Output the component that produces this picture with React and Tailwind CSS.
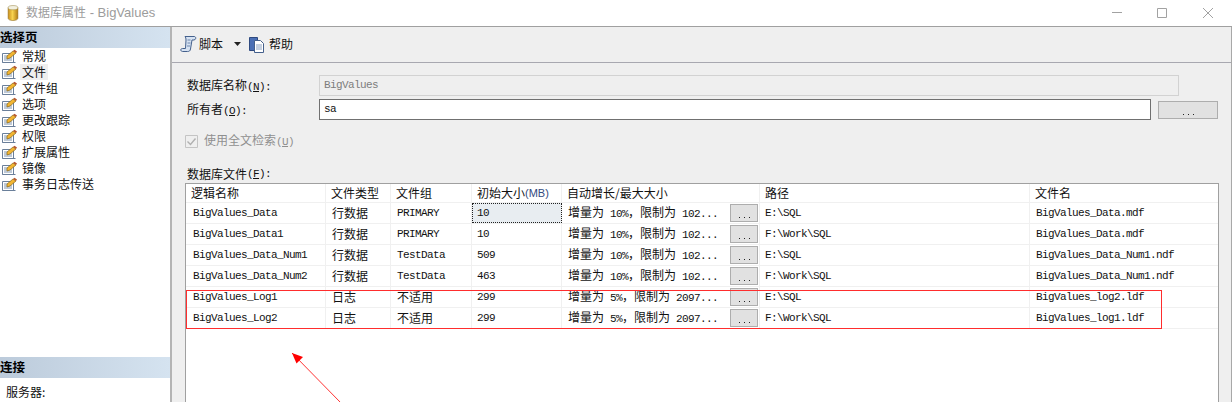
import React from "react";

const cjk = "font-['Noto_Sans_CJK_SC','Liberation_Sans',sans-serif]";
const mono = "font-['Liberation_Mono',monospace] text-[11px] tracking-[-0.6px] whitespace-pre";

function Mixed({ text }) {
  const parts = text.split(/([\x00-\xff]+)/).filter(Boolean);
  return (
    <>
      {parts.map((p, i) =>
        /^[\x00-\xff]+$/.test(p) ? (
          <span key={i} className={mono}>
            {p}
          </span>
        ) : (
          <span key={i}>{p}</span>
        )
      )}
    </>
  );
}

function Label({ before, mnemonic }) {
  return (
    <>
      {before}
      <span className={mono}>(</span>
      <span className={`${mono} underline`}>{mnemonic}</span>
      <span className={mono}>)</span>
    </>
  );
}

function PropIcon() {
  return (
    <svg width="17" height="15" viewBox="0 0 17 15" className="shrink-0">
      <path d="M1.5 4.5h11v9h-11z" fill="#fff" stroke="#6a7f9a" />
      <path d="M1.5 13.5h13" stroke="#6a7f9a" />
      <path d="M3 7h6M3 9h8M3 11h8" stroke="#7f93ad" />
      <path d="M6 7l6-5 3 2-6 5-3 1z" fill="#f3b531" stroke="#8a6a1c" strokeWidth="0.7" />
      <path d="M12 2l1.5-1.2L16 2.6 15 4z" fill="#b8572c" />
    </svg>
  );
}

function Ellipsis({ className }) {
  return (
    <div className={`flex items-end justify-center bg-[#e1e1e1] border border-[#adadad] pb-[1px] gap-[4px] ${className}`}>
      <i className="w-[1px] h-[1px] bg-[#222] mb-[2px]" />
      <i className="w-[1px] h-[1px] bg-[#222] mb-[2px]" />
      <i className="w-[1px] h-[1px] bg-[#222] mb-[2px]" />
    </div>
  );
}

const pages = ["常规", "文件", "文件组", "选项", "更改跟踪", "权限", "扩展属性", "镜像", "事务日志传送"];

const rows = [
  ["BigValues_Data", "行数据", "PRIMARY", "10", "增量为 10%，限制为 102...", "E:\\SQL", "BigValues_Data.mdf"],
  ["BigValues_Data1", "行数据", "PRIMARY", "10", "增量为 10%，限制为 102...", "F:\\Work\\SQL", "BigValues_Data.mdf"],
  ["BigValues_Data_Num1", "行数据", "TestData", "509", "增量为 10%，限制为 102...", "E:\\SQL", "BigValues_Data_Num1.ndf"],
  ["BigValues_Data_Num2", "行数据", "TestData", "463", "增量为 10%，限制为 102...", "F:\\Work\\SQL", "BigValues_Data_Num1.ndf"],
  ["BigValues_Log1", "日志", "不适用", "299", "增量为 5%，限制为 2097...", "E:\\SQL", "BigValues_log2.ldf"],
  ["BigValues_Log2", "日志", "不适用", "299", "增量为 5%，限制为 2097...", "F:\\Work\\SQL", "BigValues_log1.ldf"],
];

const cellBase = "h-full shrink-0 border-r border-[#f0f0f0] flex items-center overflow-hidden whitespace-nowrap";

function HeaderRow() {
  return (
    <div className="flex h-[19px] border-b border-[#f0f0f0] text-[#111] text-[12px]">
      <div className={`${cellBase} w-[140px] pl-[5px]`}>逻辑名称</div>
      <div className={`${cellBase} w-[65px] pl-[5px]`}>文件类型</div>
      <div className={`${cellBase} w-[81px] pl-[5px]`}>文件组</div>
      <div className={`${cellBase} w-[90px] pl-[5px]`}>
        初始大小<span className="font-['Liberation_Sans',sans-serif] text-[11px] text-[#334a80]">(MB)</span>
      </div>
      <div className={`${cellBase} w-[198px] pl-[5px]`}>自动增长/最大大小</div>
      <div className={`${cellBase} w-[270px] pl-[5px]`}>路径</div>
      <div className="h-full flex items-center pl-[5px]">文件名</div>
    </div>
  );
}

function DataRow({ r, selected }) {
  return (
    <div className="flex h-[21px] border-b border-[#f0f0f0] text-[#111] text-[12px]">
      <div className={`${cellBase} w-[140px] pl-[7px]`}><Mixed text={r[0]} /></div>
      <div className={`${cellBase} w-[65px] pl-[6px]`}><Mixed text={r[1]} /></div>
      <div className={`${cellBase} w-[81px] pl-[6px]`}><Mixed text={r[2]} /></div>
      <div
        className={`${cellBase} w-[90px] pl-[5px] ${
          selected ? "bg-[#e8edf1] outline-1 outline-dotted outline-[#222] -outline-offset-1" : ""
        }`}
      >
        <Mixed text={r[3]} />
      </div>
      <div className={`${cellBase} w-[198px] pl-[6px] justify-between pr-[1px]`}>
        <span><Mixed text={r[4]} /></span>
        <Ellipsis className="w-[28px] h-[18px] shrink-0" />
      </div>
      <div className={`${cellBase} w-[270px] pl-[5px]`}><Mixed text={r[5]} /></div>
      <div className="h-full flex items-center pl-[6px]"><Mixed text={r[6]} /></div>
    </div>
  );
}

export default function App() {
  return (
    <div className={`relative w-[1232px] h-[402px] overflow-hidden bg-white flex flex-col ${cjk}`}>
      {/* Title bar */}
      <div className="h-[27px] shrink-0 border-b border-[#a0a0a0] flex items-center pl-[7px] pb-[1px]">
        <svg width="12" height="16" viewBox="0 0 12 18" className="shrink-0">
          <defs>
            <linearGradient id="cyl" x1="0" x2="1" y1="0" y2="0">
              <stop offset="0" stopColor="#c98f1d" />
              <stop offset="0.45" stopColor="#f8d34e" />
              <stop offset="1" stopColor="#b27c14" />
            </linearGradient>
          </defs>
          <path d="M0.5 3v12c0 1.4 2.4 2.5 5.5 2.5s5.5-1.1 5.5-2.5V3z" fill="url(#cyl)" stroke="#8f6a1a" strokeWidth="0.6" />
          <ellipse cx="6" cy="3" rx="5.5" ry="2.4" fill="#f2f0e0" stroke="#9c8a4a" strokeWidth="0.6" />
        </svg>
        <span className="ml-[7px] text-[12px] text-[#9c9c9c] whitespace-pre">
          数据库属性<span className="font-['Liberation_Sans',sans-serif] text-[13px]"> - BigValues</span>
        </span>
        <div className="ml-auto flex items-center">
          <svg width="102" height="12" viewBox="0 0 102 12" className="mr-[18px]" fill="none" stroke="#a2a2a2">
            <path d="M0 5.5h10" />
            <path d="M45.5 1.5h9v9h-9z" />
            <path d="M91 1l10 10M101 1L91 11" />
          </svg>
        </div>
      </div>

      <div className="flex-1 flex min-h-0">
        {/* Sidebar */}
        <div className="w-[172px] shrink-0 border-r-2 border-[#b4b4b4] flex flex-col text-[12px] text-[#111]">
          <div className="h-[21px] shrink-0 pb-[1px] bg-gradient-to-r from-[#bccbdb] to-[#d5e3f0] flex items-center font-bold text-[12.5px] text-black">
            选择页
          </div>
          <div className="flex flex-col">
            {pages.map((p, i) => (
              <div key={p} className="h-[16px] flex items-center pl-[1px]">
                <PropIcon />
                <span className={`ml-[2px] px-[2px] h-[16px] leading-[16px] ${i === 1 ? "bg-[#efefef]" : ""}`}>{p}</span>
              </div>
            ))}
          </div>
          <div className="mt-auto">
            <div className="h-[21px] pb-[1px] bg-gradient-to-r from-[#bccbdb] to-[#d5e3f0] flex items-center font-bold text-[12.5px] text-black">
              连接
            </div>
            <div className="h-[24px] flex items-center pl-[6px] pt-[3px]">服务器:</div>
          </div>
        </div>

        {/* Main */}
        <div className="flex-1 min-w-0 flex flex-col bg-[#efefef] border-r border-[#a8a8a8] text-[12px] text-[#111]">
          <div className="h-[36px] shrink-0 border-b border-[#a8a8b0] flex items-center pl-[8px] pb-[1px]">
            <svg width="17" height="18" viewBox="0 0 17 18" className="shrink-0">
              <path d="M5 1.5h9.5c1.5 0 2 3-.5 3.5h-2l-1.5 9c-.3 2-1.3 2.5-3 2.5H2.5C.5 16.5 0 13.500 2.500 13.500H5.500L6 5C6 3.500 5.800 2.200 5 1.500z" fill="#d6e2f2" stroke="#44608c" />
              <path d="M7.500 5h3M7.500 8h3M7 11h3" stroke="#6e87ad" />
            </svg>
            <span className="ml-[2px]">脚本</span>
            <svg width="7" height="4" viewBox="0 0 7 4" className="ml-[11px]"><path d="M0 0h7L3.500 4z" fill="#222" /></svg>
            <svg width="16" height="17" viewBox="0 0 16 17" className="ml-[8px]">
              <path d="M.5 1.500h8v13h-8z" fill="#4a6fb5" stroke="#2f4a80" />
              <path d="M5.500 4.500h6l3 3v9h-9z" fill="#fff" stroke="#44608c" />
              <path d="M7 9h6M7 11h6M7 13h6" stroke="#8aa0c0" />
            </svg>
            <span className="ml-[4px]">帮助</span>
          </div>

          <div className="flex-1 min-h-0 flex flex-col pl-[13px] pr-[12px]">
            <div className="mt-[12px] flex items-center h-[21px]">
              <span className="w-[134px] pl-[2px] shrink-0 whitespace-pre"><Label before="数据库名称" mnemonic="N" /><span className={mono}>:</span></span>
              <div className="w-[860px] h-[21px] border border-[#d2d2d2] flex items-center pl-[4px] text-[#7d7d7d]">
                <Mixed text="BigValues" />
              </div>
            </div>
            <div className="mt-[3px] flex items-center h-[21px]">
              <span className="w-[134px] pl-[2px] shrink-0 whitespace-pre"><Label before="所有者" mnemonic="O" /><span className={mono}>:</span></span>
              <div className="w-[832px] h-[21px] bg-white border border-[#707070] flex items-center pl-[4px]">
                <Mixed text="sa" />
              </div>
              <Ellipsis className="ml-[7px] w-[60px] h-[18px]" />
            </div>
            <div className="mt-[14px] flex items-center h-[14px] text-[#8f8f8f]">
              <svg width="13" height="13" viewBox="0 0 13 13" className="shrink-0">
                <path d="M.5.5h12v12H.5z" fill="#efefef" stroke="#c4c4c4" />
                <path d="M2.500 6.500l3 3 5-6" fill="none" stroke="#b0b0b0" strokeWidth="1.400" />
              </svg>
              <span className="ml-[6px] whitespace-pre"><Label before="使用全文检索" mnemonic="U" /></span>
            </div>
            <div className="mt-[18px] h-[16px] pl-[2px] flex items-center whitespace-pre"><Label before="数据库文件" mnemonic="F" /><span className={mono}>:</span></div>

            <div className="mt-[1px] flex-1 min-h-0 bg-white border-t border-l border-r border-[#a0a0a0]">
              <HeaderRow />
              {rows.map((r, i) => (
                <DataRow key={i} r={r} selected={i === 0} />
              ))}
            </div>
          </div>
        </div>
      </div>

      {/* Annotation: red rectangle and arrow */}
      <div className="absolute left-[186px] top-[290px] w-[976px] h-[39px] border border-[#ff2d2d] pointer-events-none" />
      <svg className="absolute left-[285px] top-[345px] pointer-events-none" width="65" height="57" viewBox="0 0 65 57">
        <path d="M7 8L56 58" stroke="#f33" strokeWidth="1" />
        <path d="M7 8l11 4-6.500 6.500z" fill="#f00" />
      </svg>
    </div>
  );
}
